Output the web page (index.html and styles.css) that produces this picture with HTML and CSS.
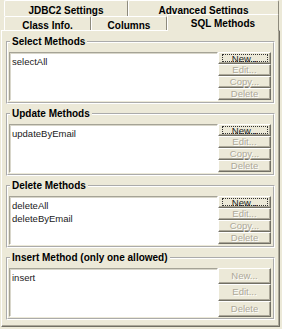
FILE: index.html
```html
<!DOCTYPE html>
<html lang="en">
<head>
    <meta charset="UTF-8">
    <meta name="viewport" content="width=device-width, initial-scale=1.0">
    <title>SQL Methods</title>
    <link rel="stylesheet" href="styles.css">
</head>
<body>
    <!-- Pestañas en dos filas -->
    <div class="tabs">
        <div class="tab-row back">
            <div class="tab tab-jdbc">JDBC2 Settings</div>
            <div class="tab tab-adv">Advanced Settings</div>
        </div>
        <div class="tab-row front">
            <div class="tab tab-class">Class Info.</div>
            <div class="tab tab-cols">Columns</div>
            <div class="tab tab-sql active">SQL Methods</div>
        </div>
    </div>

    <div class="panel">
        <fieldset class="group">
            <legend>Select Methods</legend>
            <div class="group-body">
                <ul class="list">
                    <li>selectAll</li>
                </ul>
                <div class="buttons">
                    <button type="button" class="btn"><span class="focus">New...</span></button>
                    <button type="button" class="btn" disabled>Edit...</button>
                    <button type="button" class="btn" disabled>Copy...</button>
                    <button type="button" class="btn" disabled>Delete</button>
                </div>
            </div>
        </fieldset>

        <fieldset class="group">
            <legend>Update Methods</legend>
            <div class="group-body">
                <ul class="list">
                    <li>updateByEmail</li>
                </ul>
                <div class="buttons">
                    <button type="button" class="btn"><span class="focus">New...</span></button>
                    <button type="button" class="btn" disabled>Edit...</button>
                    <button type="button" class="btn" disabled>Copy...</button>
                    <button type="button" class="btn" disabled>Delete</button>
                </div>
            </div>
        </fieldset>

        <fieldset class="group">
            <legend>Delete Methods</legend>
            <div class="group-body">
                <ul class="list">
                    <li>deleteAll</li>
                    <li>deleteByEmail</li>
                </ul>
                <div class="buttons">
                    <button type="button" class="btn"><span class="focus">New...</span></button>
                    <button type="button" class="btn" disabled>Edit...</button>
                    <button type="button" class="btn" disabled>Copy...</button>
                    <button type="button" class="btn" disabled>Delete</button>
                </div>
            </div>
        </fieldset>

        <fieldset class="group">
            <legend>Insert Method (only one allowed)</legend>
            <div class="group-body">
                <ul class="list">
                    <li>insert</li>
                </ul>
                <div class="buttons tall">
                    <button type="button" class="btn" disabled>New...</button>
                    <button type="button" class="btn" disabled>Edit...</button>
                    <button type="button" class="btn" disabled>Delete</button>
                </div>
            </div>
        </fieldset>
    </div>
</body>
</html>
```

FILE: styles.css
```css
body {
    margin: 0;
    width: 282px;
    height: 329px;
    overflow: hidden;
    background-color: #ece9d8;
    font-family: "Liberation Sans", Arial, sans-serif;
    font-size: 9.5px;
    color: #000;
}

/* Pestañas */
.tabs {
    height: 30px;
}
.tab-row {
    display: flex;
    padding-left: 4px;
}
.tab-row.back {
    height: 16px;
}
.tab-row.front {
    height: 14px;
}
.tab {
    box-sizing: border-box;
    border-top: 1px solid #fff;
    border-left: 1px solid #fff;
    border-right: 1px solid #8d8a7c;
    border-radius: 2px 2px 0 0;
    font-size: 10px;
    font-weight: bold;
    line-height: 11px;
    text-align: center;
    white-space: nowrap;
    background-color: #ece9d8;
}
.back .tab {
    padding-top: 4px;
}
.front .tab {
    padding-top: 3px;
}
.tab-jdbc { width: 124px; }
.tab-adv { width: 151px; }
.tab-class { width: 87px; }
.tab-cols { width: 76px; }
.tab-sql { width: 112px; }
.tab.active {
    position: relative;
    z-index: 1;
    height: 17px;
    margin-top: -2px;
    padding-top: 3px;
}

/* Panel */
.panel {
    box-sizing: border-box;
    width: 279px;
    height: 297px;
    margin-left: 1px;
    padding: 5px 2px 0;
    border-top: 1px solid #fff;
    border-left: 1px solid #fff;
    border-right: 1px solid #716f64;
    border-bottom: 1px solid #716f64;
    box-shadow: inset -1px -1px 0 #aca899;
    display: flex;
    flex-direction: column;
    gap: 4px;
}

.group {
    margin: 0 2px;
    padding: 4px 2px 1px 1px;
    border: 2px groove #fff;
    min-width: 0;
}
.group legend {
    margin-left: 1px;
    padding: 0 2px;
    font-size: 10px;
    font-weight: bold;
    line-height: 12px;
}
.group-body {
    display: flex;
    height: 49px;
}

.list {
    flex: 1;
    margin: 0;
    padding: 2px 2px 0;
    list-style: none;
    background: #fff;
    border: 1px solid;
    border-color: #a5a396 #fff #fff #a5a396;
    box-shadow: inset 1px 1px 0 #d8d6ca;
    line-height: 13px;
    color: #1a1a1a;
}

.buttons {
    width: 53px;
    display: flex;
    flex-direction: column;
}
.btn {
    box-sizing: border-box;
    height: 12px;
    margin: 0;
    padding: 0;
    font-family: inherit;
    font-size: 9.5px;
    line-height: 8px;
    color: #222;
    background-color: #ece9d8;
    border: 1px solid;
    border-color: #fff #716f64 #716f64 #fff;
    box-shadow: inset -1px -1px 0 #aca899;
    text-align: center;
}
.btn:disabled {
    color: #aca899;
    text-shadow: 1px 1px 0 #fff;
}
.btn .focus {
    display: block;
    margin: 1px 2px 1px 3px;
    height: 6px;
    line-height: 8px;
    border: 1px dotted #333;
}
.buttons.tall .btn {
    flex: 1;
    height: auto;
    line-height: 14px;
}
```
